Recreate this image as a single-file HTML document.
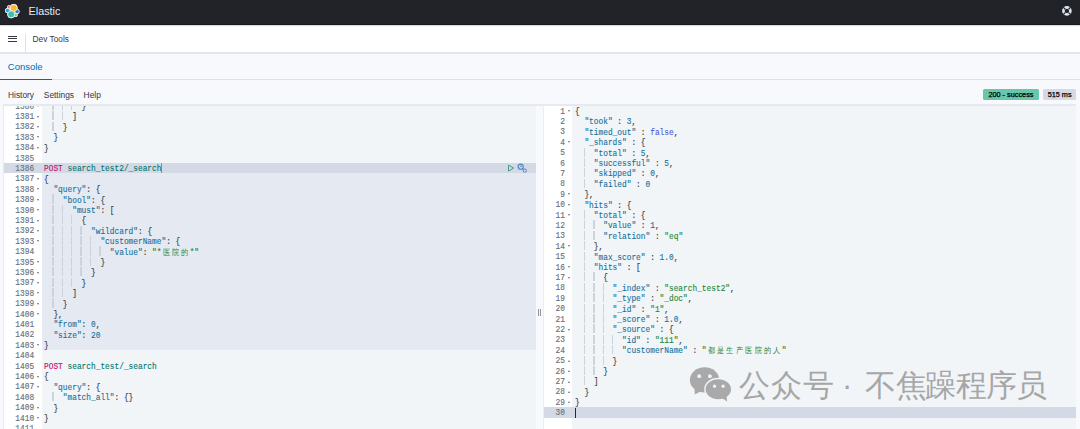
<!DOCTYPE html>
<html><head><meta charset="utf-8"><title>Dev Tools</title><style>
*{margin:0;padding:0;box-sizing:border-box}
html,body{width:1080px;height:429px;overflow:hidden;background:#f7f9fc;font-family:"Liberation Sans",sans-serif;position:relative}
.abs{position:absolute}
#hd1{position:absolute;left:0;top:0;width:1080px;height:25px;background:#212328;border-bottom:1px solid #16181b;z-index:2;box-shadow:0 0.6px 1.2px rgba(0,0,0,0.18)}
#hd2{position:absolute;left:0;top:25px;width:1080px;height:29px;background:#fff;border-bottom:2.3px solid #e1e5ec}
.brand{position:absolute;left:28.6px;top:4.6px;font-size:10.8px;line-height:13px;color:#e6ebf2}
.burger{position:absolute;left:7.9px;width:9px;height:1.2px;background:#343741}
.vdiv{position:absolute;left:25px;top:34px;width:1px;height:18px;background:#dde2ea}
.crumb{position:absolute;left:32.6px;top:33px;font-size:8.3px;line-height:11px;color:#343741}
.tab{position:absolute;left:7.8px;top:60.2px;font-size:9.5px;line-height:13px;color:#006bb4}
.tabline{position:absolute;left:0;top:78.8px;width:1080px;height:1px;background:#dde1e9}
.tabsel{position:absolute;left:0;top:78.5px;width:51.7px;height:1.6px;background:#006bb4}
.menu{position:absolute;top:89.8px;font-size:8.4px;line-height:11px;color:#343741}
.badge{position:absolute;top:89.3px;height:11.2px;border-radius:1.5px;font-size:7.3px;line-height:11.2px;text-align:center;color:#000;-webkit-text-stroke:0.25px #000}
.ed{position:absolute;overflow:hidden;background:#f1f5f8}
.gut{position:absolute;left:0;top:0;bottom:0;background:#fff}
.sel{position:absolute;background:#e5eaf2}
.act{position:absolute;background:#d3dae6}
.cur{position:absolute;width:0.9px;background:#555}
.ln{position:absolute;left:0;text-align:right;transform:scaleX(0.890);transform-origin:100% 0;font-family:"Liberation Mono",monospace;font-size:8.801px;line-height:10.40px;color:#69707d;white-space:pre;-webkit-text-stroke:0.15px currentColor}
.fw{position:absolute;width:0;height:0;border-left:1.5px solid transparent;border-right:1.5px solid transparent;border-top:2px solid #69707d}
.fw.up{border-top:0;border-bottom:2px solid #69707d}
.ig{position:absolute;width:1.4px;height:9.2px;background:#cdd2db}
.tl{position:absolute;transform:scaleX(0.890);transform-origin:0 0;font-family:"Liberation Mono",monospace;font-size:8.801px;line-height:10.40px;white-space:pre;color:#343741;-webkit-text-stroke:0.12px currentColor}
.tl i{font-style:normal}
.tl .k{color:#17719a}
.tl .s{color:#1e8637}
.tl .n{color:#17719a}
.tl .b{color:#4a5ce0}
.tl .p{color:#343741}
.tl .m{color:#c80a68}
.tl .u{color:#00756c}
.cj{-webkit-text-stroke:0;display:inline-block;width:10.56px;font-weight:normal;text-align:center;font-size:8px;line-height:10.40px;vertical-align:top}
.resz{position:absolute;left:535.8px;top:104.3px;width:7.8px;height:325px;background:#f8f9fc}
.grip{position:absolute;top:308.6px;width:0.9px;height:7px;background:#8e949e}
.wm{position:absolute;color:#a6a6a6;font-size:30.6px;line-height:34px;white-space:pre}

</style></head><body>
<div id="hd1">
  <svg class="abs" style="left:0;top:0" width="24" height="25" viewBox="0 0 24 25">
    <g fill="#fff"><circle cx="13.7" cy="7.9" r="3.9"/><circle cx="8.9" cy="7.0" r="1.8"/><circle cx="7.6" cy="10.6" r="2.6"/><circle cx="11.2" cy="14.3" r="3.9"/><circle cx="17.0" cy="11.4" r="2.5"/><circle cx="15.8" cy="15.1" r="1.9"/></g>
    <g stroke="#fff" stroke-width="0.6">
    <circle cx="8.9" cy="7.0" r="1.4" fill="#e8488b"/>
    <circle cx="7.6" cy="10.6" r="2.2" fill="#2a9de2"/>
    <circle cx="17.0" cy="11.4" r="2.1" fill="#1b6fcf"/>
    <circle cx="15.8" cy="15.1" r="1.5" fill="#8fc13d"/>
    <circle cx="13.7" cy="7.9" r="3.5" fill="#f9b92e"/>
    <circle cx="11.2" cy="14.3" r="3.5" fill="#3ebfb1"/>
    </g>
  </svg>
  <div class="brand">Elastic</div>
  <svg class="abs" style="left:1060px;top:4px" width="14" height="14" viewBox="0 0 14 14">
    <circle cx="6.9" cy="6.9" r="3.5" fill="none" stroke="#dfe5ef" stroke-width="2.6"/>
    <g stroke="#212328" stroke-width="1.25"><line x1="3.4" y1="3.4" x2="5.2" y2="5.2"/><line x1="10.4" y1="3.4" x2="8.6" y2="5.2"/><line x1="3.4" y1="10.4" x2="5.2" y2="8.6"/><line x1="10.4" y1="10.4" x2="8.6" y2="8.6"/></g>
  </svg>
</div>
<div id="hd2">
  <div class="burger" style="top:10.5px"></div>
  <div class="burger" style="top:13.1px"></div>
  <div class="burger" style="top:15.8px"></div>
  <div class="vdiv" style="top:9px;height:17.8px"></div>
  <div class="crumb" style="top:8.9px">Dev Tools</div>
</div>
<div class="tab">Console</div>
<div class="tabline"></div>
<div class="tabsel"></div>
<div class="menu" style="left:8px">History</div>
<div class="menu" style="left:43.8px">Settings</div>
<div class="menu" style="left:83.6px">Help</div>
<div class="badge" style="left:982.8px;width:56.3px;background:#68c7ab">200 - success</div>
<div class="badge" style="left:1043.3px;width:32.6px;background:#d3dae6">515 ms</div>
<div class="abs" style="left:3.2px;top:103.8px;width:1px;height:326px;background:#e8ecf2"></div>
<div class="ed" style="left:4.10px;top:105.30px;width:531.70px;height:323.70px">
<div class="gut" style="width:37.70px"></div>
<div class="sel" style="left:37.70px;top:57.40px;width:494.00px;height:187.20px"></div><div class="act" style="left:0;top:57.40px;width:100%;height:10.40px"></div><div class="cur" style="left:156.90px;top:57.70px;height:9.80px;background:#8a8f99"></div>
<div class="ln" style="top:-3.70px;width:30.10px">1380</div>
<div class="fw" style="top:-0.10px;left:32.50px"></div>
<div class="ig" style="top:-4.40px;left:48.10px"></div>
<div class="ig" style="top:-4.40px;left:57.50px"></div>
<div class="ig" style="top:-4.40px;left:66.90px"></div>
<div class="tl" style="top:-3.35px;left:39.60px">        <i class="p">}</i></div>
<div class="ln" style="top:6.70px;width:30.10px">1381</div>
<div class="fw" style="top:10.30px;left:32.50px"></div>
<div class="ig" style="top:6.00px;left:48.10px"></div>
<div class="ig" style="top:6.00px;left:57.50px"></div>
<div class="tl" style="top:7.05px;left:39.60px">      <i class="p">]</i></div>
<div class="ln" style="top:17.10px;width:30.10px">1382</div>
<div class="fw" style="top:20.70px;left:32.50px"></div>
<div class="ig" style="top:16.40px;left:48.10px"></div>
<div class="tl" style="top:17.45px;left:39.60px">    <i class="p">}</i></div>
<div class="ln" style="top:27.50px;width:30.10px">1383</div>
<div class="fw" style="top:31.10px;left:32.50px"></div>
<div class="tl" style="top:27.85px;left:39.60px">  <i class="p">}</i></div>
<div class="ln" style="top:37.90px;width:30.10px">1384</div>
<div class="fw" style="top:41.50px;left:32.50px"></div>
<div class="tl" style="top:38.25px;left:39.60px"><i class="p">}</i></div>
<div class="ln" style="top:48.30px;width:30.10px">1385</div>
<div class="ln" style="top:58.70px;width:30.10px">1386</div>
<div class="tl" style="top:59.05px;left:39.60px"><i class="m">POST</i> <i class="u">search_test2/_search</i></div>
<div class="ln" style="top:69.10px;width:30.10px">1387</div>
<div class="fw" style="top:72.70px;left:32.50px"></div>
<div class="tl" style="top:69.45px;left:39.60px"><i class="p">{</i></div>
<div class="ln" style="top:79.50px;width:30.10px">1388</div>
<div class="fw" style="top:83.10px;left:32.50px"></div>
<div class="tl" style="top:79.85px;left:39.60px">  <i class="k">&quot;query&quot;</i><i class="p">:</i> <i class="p">{</i></div>
<div class="ln" style="top:89.90px;width:30.10px">1389</div>
<div class="fw" style="top:93.50px;left:32.50px"></div>
<div class="ig" style="top:89.20px;left:48.10px"></div>
<div class="tl" style="top:90.25px;left:39.60px">    <i class="k">&quot;bool&quot;</i><i class="p">:</i> <i class="p">{</i></div>
<div class="ln" style="top:100.30px;width:30.10px">1390</div>
<div class="fw" style="top:103.90px;left:32.50px"></div>
<div class="ig" style="top:99.60px;left:48.10px"></div>
<div class="ig" style="top:99.60px;left:57.50px"></div>
<div class="tl" style="top:100.65px;left:39.60px">      <i class="k">&quot;must&quot;</i><i class="p">:</i> <i class="p">[</i></div>
<div class="ln" style="top:110.70px;width:30.10px">1391</div>
<div class="fw" style="top:114.30px;left:32.50px"></div>
<div class="ig" style="top:110.00px;left:48.10px"></div>
<div class="ig" style="top:110.00px;left:57.50px"></div>
<div class="ig" style="top:110.00px;left:66.90px"></div>
<div class="tl" style="top:111.05px;left:39.60px">        <i class="p">{</i></div>
<div class="ln" style="top:121.10px;width:30.10px">1392</div>
<div class="fw" style="top:124.70px;left:32.50px"></div>
<div class="ig" style="top:120.40px;left:48.10px"></div>
<div class="ig" style="top:120.40px;left:57.50px"></div>
<div class="ig" style="top:120.40px;left:66.90px"></div>
<div class="ig" style="top:120.40px;left:76.30px"></div>
<div class="tl" style="top:121.45px;left:39.60px">          <i class="k">&quot;wildcard&quot;</i><i class="p">:</i> <i class="p">{</i></div>
<div class="ln" style="top:131.50px;width:30.10px">1393</div>
<div class="fw" style="top:135.10px;left:32.50px"></div>
<div class="ig" style="top:130.80px;left:48.10px"></div>
<div class="ig" style="top:130.80px;left:57.50px"></div>
<div class="ig" style="top:130.80px;left:66.90px"></div>
<div class="ig" style="top:130.80px;left:76.30px"></div>
<div class="ig" style="top:130.80px;left:85.70px"></div>
<div class="tl" style="top:131.85px;left:39.60px">            <i class="k">&quot;customerName&quot;</i><i class="p">:</i> <i class="p">{</i></div>
<div class="ln" style="top:141.90px;width:30.10px">1394</div>
<div class="ig" style="top:141.20px;left:48.10px"></div>
<div class="ig" style="top:141.20px;left:57.50px"></div>
<div class="ig" style="top:141.20px;left:66.90px"></div>
<div class="ig" style="top:141.20px;left:76.30px"></div>
<div class="ig" style="top:141.20px;left:85.70px"></div>
<div class="ig" style="top:141.20px;left:95.10px"></div>
<div class="tl" style="top:142.25px;left:39.60px">              <i class="k">&quot;value&quot;</i><i class="p">:</i> <i class="s">&quot;*<b class="cj">医</b><b class="cj">院</b><b class="cj">的</b>*&quot;</i></div>
<div class="ln" style="top:152.30px;width:30.10px">1395</div>
<div class="fw" style="top:155.90px;left:32.50px"></div>
<div class="ig" style="top:151.60px;left:48.10px"></div>
<div class="ig" style="top:151.60px;left:57.50px"></div>
<div class="ig" style="top:151.60px;left:66.90px"></div>
<div class="ig" style="top:151.60px;left:76.30px"></div>
<div class="ig" style="top:151.60px;left:85.70px"></div>
<div class="tl" style="top:152.65px;left:39.60px">            <i class="p">}</i></div>
<div class="ln" style="top:162.70px;width:30.10px">1396</div>
<div class="fw" style="top:166.30px;left:32.50px"></div>
<div class="ig" style="top:162.00px;left:48.10px"></div>
<div class="ig" style="top:162.00px;left:57.50px"></div>
<div class="ig" style="top:162.00px;left:66.90px"></div>
<div class="ig" style="top:162.00px;left:76.30px"></div>
<div class="tl" style="top:163.05px;left:39.60px">          <i class="p">}</i></div>
<div class="ln" style="top:173.10px;width:30.10px">1397</div>
<div class="fw" style="top:176.70px;left:32.50px"></div>
<div class="ig" style="top:172.40px;left:48.10px"></div>
<div class="ig" style="top:172.40px;left:57.50px"></div>
<div class="ig" style="top:172.40px;left:66.90px"></div>
<div class="tl" style="top:173.45px;left:39.60px">        <i class="p">}</i></div>
<div class="ln" style="top:183.50px;width:30.10px">1398</div>
<div class="fw" style="top:187.10px;left:32.50px"></div>
<div class="ig" style="top:182.80px;left:48.10px"></div>
<div class="ig" style="top:182.80px;left:57.50px"></div>
<div class="tl" style="top:183.85px;left:39.60px">      <i class="p">]</i></div>
<div class="ln" style="top:193.90px;width:30.10px">1399</div>
<div class="fw" style="top:197.50px;left:32.50px"></div>
<div class="ig" style="top:193.20px;left:48.10px"></div>
<div class="tl" style="top:194.25px;left:39.60px">    <i class="p">}</i></div>
<div class="ln" style="top:204.30px;width:30.10px">1400</div>
<div class="fw" style="top:207.90px;left:32.50px"></div>
<div class="tl" style="top:204.65px;left:39.60px">  <i class="p">}</i><i class="p">,</i></div>
<div class="ln" style="top:214.70px;width:30.10px">1401</div>
<div class="tl" style="top:215.05px;left:39.60px">  <i class="k">&quot;from&quot;</i><i class="p">:</i> <i class="n">0</i><i class="p">,</i></div>
<div class="ln" style="top:225.10px;width:30.10px">1402</div>
<div class="tl" style="top:225.45px;left:39.60px">  <i class="k">&quot;size&quot;</i><i class="p">:</i> <i class="n">20</i></div>
<div class="ln" style="top:235.50px;width:30.10px">1403</div>
<div class="fw" style="top:239.10px;left:32.50px"></div>
<div class="tl" style="top:235.85px;left:39.60px"><i class="p">}</i></div>
<div class="ln" style="top:245.90px;width:30.10px">1404</div>
<div class="ln" style="top:256.30px;width:30.10px">1405</div>
<div class="tl" style="top:256.65px;left:39.60px"><i class="m">POST</i> <i class="u">search_test/_search</i></div>
<div class="ln" style="top:266.70px;width:30.10px">1406</div>
<div class="fw" style="top:270.30px;left:32.50px"></div>
<div class="tl" style="top:267.05px;left:39.60px"><i class="p">{</i></div>
<div class="ln" style="top:277.10px;width:30.10px">1407</div>
<div class="fw" style="top:280.70px;left:32.50px"></div>
<div class="tl" style="top:277.45px;left:39.60px">  <i class="k">&quot;query&quot;</i><i class="p">:</i> <i class="p">{</i></div>
<div class="ln" style="top:287.50px;width:30.10px">1408</div>
<div class="ig" style="top:286.80px;left:48.10px"></div>
<div class="tl" style="top:287.85px;left:39.60px">    <i class="k">&quot;match_all&quot;</i><i class="p">:</i> <i class="p">{</i><i class="p">}</i></div>
<div class="ln" style="top:297.90px;width:30.10px">1409</div>
<div class="fw" style="top:301.50px;left:32.50px"></div>
<div class="tl" style="top:298.25px;left:39.60px">  <i class="p">}</i></div>
<div class="ln" style="top:308.30px;width:30.10px">1410</div>
<div class="fw" style="top:311.90px;left:32.50px"></div>
<div class="tl" style="top:308.65px;left:39.60px"><i class="p">}</i></div>
<div class="ln" style="top:318.70px;width:30.10px">1411</div>
</div>
<svg class="abs" style="left:500px;top:158px" width="34" height="20" viewBox="500 158 34 20">
  <path d="M508.5 165.1 L513.6 168.1 L508.5 171.1 Z" fill="none" stroke="#4a9a87" stroke-width="1" stroke-linejoin="round"/>
  <circle cx="520.7" cy="166.7" r="2.55" fill="none" stroke="#4a87c4" stroke-width="1.1"/>
  <path d="M519.6 167.6 L521.3 165.9 M520.3 165.3 L521.9 166.9" stroke="#4a87c4" stroke-width="0.7"/>
  <path d="M522.4 168.5 L523.6 169.6" stroke="#4a87c4" stroke-width="1.1"/>
  <circle cx="524.8" cy="170.6" r="1.65" fill="none" stroke="#4a87c4" stroke-width="0.95"/>
</svg>
<div class="resz"></div>
<div class="abs" style="left:543.4px;top:105px;width:1px;height:324px;background:#eaedf2"></div>
<div class="abs" style="left:3.2px;top:103.6px;width:1072.8px;height:2.3px;background:#e6eaf0;z-index:3"></div>
<div class="grip" style="left:538.2px"></div>
<div class="grip" style="left:540.2px"></div>
<div class="ed" style="left:544.40px;top:105.50px;width:531.60px;height:323.50px">
<div class="gut" style="width:27.80px"></div>
<div class="act" style="left:0;top:301.40px;width:100%;height:11.00px"></div><div class="cur" style="left:30.20px;top:302.10px;height:10.00px;width:1.3px;background:#2a2a2a"></div>
<div class="ln" style="top:1.10px;width:21.00px">1</div>
<div class="fw" style="top:4.70px;left:23.20px"></div>
<div class="tl" style="top:1.45px;left:30.90px"><i class="p">{</i></div>
<div class="ln" style="top:11.50px;width:21.00px">2</div>
<div class="tl" style="top:11.85px;left:30.90px">  <i class="k">&quot;took&quot;</i> <i class="p">:</i> <i class="n">3</i><i class="p">,</i></div>
<div class="ln" style="top:21.90px;width:21.00px">3</div>
<div class="tl" style="top:22.25px;left:30.90px">  <i class="k">&quot;timed_out&quot;</i> <i class="p">:</i> <i class="b">false</i><i class="p">,</i></div>
<div class="ln" style="top:32.30px;width:21.00px">4</div>
<div class="fw" style="top:35.90px;left:23.20px"></div>
<div class="tl" style="top:32.65px;left:30.90px">  <i class="k">&quot;_shards&quot;</i> <i class="p">:</i> <i class="p">{</i></div>
<div class="ln" style="top:42.70px;width:21.00px">5</div>
<div class="ig" style="top:42.00px;left:39.40px"></div>
<div class="tl" style="top:43.05px;left:30.90px">    <i class="k">&quot;total&quot;</i> <i class="p">:</i> <i class="n">5</i><i class="p">,</i></div>
<div class="ln" style="top:53.10px;width:21.00px">6</div>
<div class="ig" style="top:52.40px;left:39.40px"></div>
<div class="tl" style="top:53.45px;left:30.90px">    <i class="k">&quot;successful&quot;</i> <i class="p">:</i> <i class="n">5</i><i class="p">,</i></div>
<div class="ln" style="top:63.50px;width:21.00px">7</div>
<div class="ig" style="top:62.80px;left:39.40px"></div>
<div class="tl" style="top:63.85px;left:30.90px">    <i class="k">&quot;skipped&quot;</i> <i class="p">:</i> <i class="n">0</i><i class="p">,</i></div>
<div class="ln" style="top:73.90px;width:21.00px">8</div>
<div class="ig" style="top:73.20px;left:39.40px"></div>
<div class="tl" style="top:74.25px;left:30.90px">    <i class="k">&quot;failed&quot;</i> <i class="p">:</i> <i class="n">0</i></div>
<div class="ln" style="top:84.30px;width:21.00px">9</div>
<div class="fw" style="top:87.90px;left:23.20px"></div>
<div class="tl" style="top:84.65px;left:30.90px">  <i class="p">}</i><i class="p">,</i></div>
<div class="ln" style="top:94.70px;width:21.00px">10</div>
<div class="fw" style="top:98.30px;left:23.20px"></div>
<div class="tl" style="top:95.05px;left:30.90px">  <i class="k">&quot;hits&quot;</i> <i class="p">:</i> <i class="p">{</i></div>
<div class="ln" style="top:105.10px;width:21.00px">11</div>
<div class="fw" style="top:108.70px;left:23.20px"></div>
<div class="ig" style="top:104.40px;left:39.40px"></div>
<div class="tl" style="top:105.45px;left:30.90px">    <i class="k">&quot;total&quot;</i> <i class="p">:</i> <i class="p">{</i></div>
<div class="ln" style="top:115.50px;width:21.00px">12</div>
<div class="ig" style="top:114.80px;left:39.40px"></div>
<div class="ig" style="top:114.80px;left:48.80px"></div>
<div class="tl" style="top:115.85px;left:30.90px">      <i class="k">&quot;value&quot;</i> <i class="p">:</i> <i class="n">1</i><i class="p">,</i></div>
<div class="ln" style="top:125.90px;width:21.00px">13</div>
<div class="ig" style="top:125.20px;left:39.40px"></div>
<div class="ig" style="top:125.20px;left:48.80px"></div>
<div class="tl" style="top:126.25px;left:30.90px">      <i class="k">&quot;relation&quot;</i> <i class="p">:</i> <i class="s">&quot;eq&quot;</i></div>
<div class="ln" style="top:136.30px;width:21.00px">14</div>
<div class="fw" style="top:139.90px;left:23.20px"></div>
<div class="ig" style="top:135.60px;left:39.40px"></div>
<div class="tl" style="top:136.65px;left:30.90px">    <i class="p">}</i><i class="p">,</i></div>
<div class="ln" style="top:146.70px;width:21.00px">15</div>
<div class="ig" style="top:146.00px;left:39.40px"></div>
<div class="tl" style="top:147.05px;left:30.90px">    <i class="k">&quot;max_score&quot;</i> <i class="p">:</i> <i class="n">1.0</i><i class="p">,</i></div>
<div class="ln" style="top:157.10px;width:21.00px">16</div>
<div class="fw" style="top:160.70px;left:23.20px"></div>
<div class="ig" style="top:156.40px;left:39.40px"></div>
<div class="tl" style="top:157.45px;left:30.90px">    <i class="k">&quot;hits&quot;</i> <i class="p">:</i> <i class="p">[</i></div>
<div class="ln" style="top:167.50px;width:21.00px">17</div>
<div class="fw" style="top:171.10px;left:23.20px"></div>
<div class="ig" style="top:166.80px;left:39.40px"></div>
<div class="ig" style="top:166.80px;left:48.80px"></div>
<div class="tl" style="top:167.85px;left:30.90px">      <i class="p">{</i></div>
<div class="ln" style="top:177.90px;width:21.00px">18</div>
<div class="ig" style="top:177.20px;left:39.40px"></div>
<div class="ig" style="top:177.20px;left:48.80px"></div>
<div class="ig" style="top:177.20px;left:58.20px"></div>
<div class="tl" style="top:178.25px;left:30.90px">        <i class="k">&quot;_index&quot;</i> <i class="p">:</i> <i class="s">&quot;search_test2&quot;</i><i class="p">,</i></div>
<div class="ln" style="top:188.30px;width:21.00px">19</div>
<div class="ig" style="top:187.60px;left:39.40px"></div>
<div class="ig" style="top:187.60px;left:48.80px"></div>
<div class="ig" style="top:187.60px;left:58.20px"></div>
<div class="tl" style="top:188.65px;left:30.90px">        <i class="k">&quot;_type&quot;</i> <i class="p">:</i> <i class="s">&quot;_doc&quot;</i><i class="p">,</i></div>
<div class="ln" style="top:198.70px;width:21.00px">20</div>
<div class="ig" style="top:198.00px;left:39.40px"></div>
<div class="ig" style="top:198.00px;left:48.80px"></div>
<div class="ig" style="top:198.00px;left:58.20px"></div>
<div class="tl" style="top:199.05px;left:30.90px">        <i class="k">&quot;_id&quot;</i> <i class="p">:</i> <i class="s">&quot;1&quot;</i><i class="p">,</i></div>
<div class="ln" style="top:209.10px;width:21.00px">21</div>
<div class="ig" style="top:208.40px;left:39.40px"></div>
<div class="ig" style="top:208.40px;left:48.80px"></div>
<div class="ig" style="top:208.40px;left:58.20px"></div>
<div class="tl" style="top:209.45px;left:30.90px">        <i class="k">&quot;_score&quot;</i> <i class="p">:</i> <i class="n">1.0</i><i class="p">,</i></div>
<div class="ln" style="top:219.50px;width:21.00px">22</div>
<div class="fw" style="top:223.10px;left:23.20px"></div>
<div class="ig" style="top:218.80px;left:39.40px"></div>
<div class="ig" style="top:218.80px;left:48.80px"></div>
<div class="ig" style="top:218.80px;left:58.20px"></div>
<div class="tl" style="top:219.85px;left:30.90px">        <i class="k">&quot;_source&quot;</i> <i class="p">:</i> <i class="p">{</i></div>
<div class="ln" style="top:229.90px;width:21.00px">23</div>
<div class="ig" style="top:229.20px;left:39.40px"></div>
<div class="ig" style="top:229.20px;left:48.80px"></div>
<div class="ig" style="top:229.20px;left:58.20px"></div>
<div class="ig" style="top:229.20px;left:67.60px"></div>
<div class="tl" style="top:230.25px;left:30.90px">          <i class="k">&quot;id&quot;</i> <i class="p">:</i> <i class="s">&quot;111&quot;</i><i class="p">,</i></div>
<div class="ln" style="top:240.30px;width:21.00px">24</div>
<div class="ig" style="top:239.60px;left:39.40px"></div>
<div class="ig" style="top:239.60px;left:48.80px"></div>
<div class="ig" style="top:239.60px;left:58.20px"></div>
<div class="ig" style="top:239.60px;left:67.60px"></div>
<div class="tl" style="top:240.65px;left:30.90px">          <i class="k">&quot;customerName&quot;</i> <i class="p">:</i> <i class="s">&quot;<b class="cj">都</b><b class="cj">是</b><b class="cj">生</b><b class="cj">产</b><b class="cj">医</b><b class="cj">院</b><b class="cj">的</b><b class="cj">人</b>&quot;</i></div>
<div class="ln" style="top:250.70px;width:21.00px">25</div>
<div class="fw up" style="top:254.30px;left:23.20px"></div>
<div class="ig" style="top:250.00px;left:39.40px"></div>
<div class="ig" style="top:250.00px;left:48.80px"></div>
<div class="ig" style="top:250.00px;left:58.20px"></div>
<div class="tl" style="top:251.05px;left:30.90px">        <i class="p">}</i></div>
<div class="ln" style="top:261.10px;width:21.00px">26</div>
<div class="fw up" style="top:264.70px;left:23.20px"></div>
<div class="ig" style="top:260.40px;left:39.40px"></div>
<div class="ig" style="top:260.40px;left:48.80px"></div>
<div class="tl" style="top:261.45px;left:30.90px">      <i class="p">}</i></div>
<div class="ln" style="top:271.50px;width:21.00px">27</div>
<div class="fw up" style="top:275.10px;left:23.20px"></div>
<div class="ig" style="top:270.80px;left:39.40px"></div>
<div class="tl" style="top:271.85px;left:30.90px">    <i class="p">]</i></div>
<div class="ln" style="top:281.90px;width:21.00px">28</div>
<div class="fw up" style="top:285.50px;left:23.20px"></div>
<div class="tl" style="top:282.25px;left:30.90px">  <i class="p">}</i></div>
<div class="ln" style="top:292.30px;width:21.00px">29</div>
<div class="fw up" style="top:295.90px;left:23.20px"></div>
<div class="tl" style="top:292.65px;left:30.90px"><i class="p">}</i></div>
<div class="ln" style="top:302.70px;width:21.00px">30</div>
</div>
<svg class="abs" style="left:684px;top:362px" width="54" height="44" viewBox="0 0 54 44">
  <ellipse cx="20.6" cy="17.9" rx="14.7" ry="12.6" fill="#a9a9a9"/>
  <path d="M10.5 26 L10.8 32.6 L18.5 28.5 Z" fill="#a9a9a9"/>
  <circle cx="15.2" cy="14.2" r="1.9" fill="#f1f5f8"/>
  <circle cx="25.9" cy="14.2" r="1.9" fill="#f1f5f8"/>
  <ellipse cx="34.3" cy="27.2" rx="13.4" ry="10.7" fill="#a9a9a9" stroke="#f1f5f8" stroke-width="1.4"/>
  <path d="M38 36 L43.2 39.6 L42.5 34 Z" fill="#a9a9a9"/>
  <circle cx="30.5" cy="24.2" r="1.6" fill="#f1f5f8"/>
  <circle cx="39.1" cy="24.2" r="1.6" fill="#f1f5f8"/>
</svg>
<div class="wm" style="left:739.10px;top:368px">公</div>
<div class="wm" style="left:771.35px;top:368px">众</div>
<div class="wm" style="left:803.15px;top:368px">号</div>
<div class="wm" style="left:864.95px;top:368px">不</div>
<div class="wm" style="left:895.50px;top:368px">焦</div>
<div class="wm" style="left:924.80px;top:368px">躁</div>
<div class="wm" style="left:955.60px;top:368px">程</div>
<div class="wm" style="left:985.75px;top:368px">序</div>
<div class="wm" style="left:1015.80px;top:368px">员</div>
<div class="wm" style="left:835.6px;top:368px;width:23px;text-align:center">·</div>


</body></html>
